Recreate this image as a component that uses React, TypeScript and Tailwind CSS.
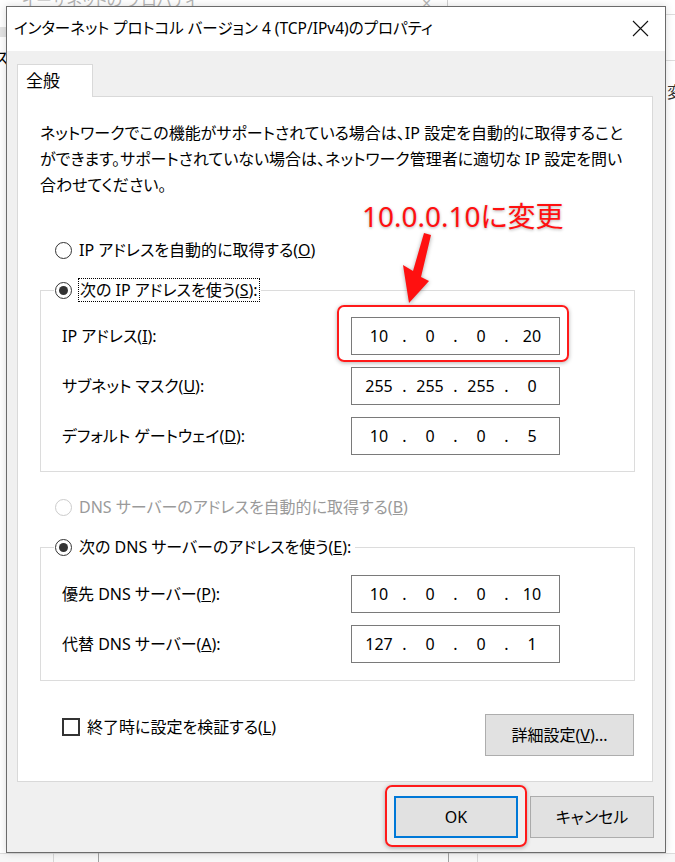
import React from 'react';

const ui = "font-['Noto_Sans','Noto_Sans_CJK_JP',sans-serif] [font-feature-settings:'palt']";

const Radio = ({ checked, disabled }: { checked?: boolean; disabled?: boolean }) => (
  <span
    className={`w-[17px] h-[17px] shrink-0 rounded-full border bg-white flex items-center justify-center ${
      disabled ? 'border-[#cccccc]' : 'border-[#333333]'
    }`}
  >
    {checked && <span className="w-[9px] h-[9px] rounded-full bg-[#333333]" />}
  </span>
);

const IpBox = ({ parts }: { parts: string[] }) => (
  <div className="w-[209px] h-[38px] border border-[#7a7a7a] bg-white flex items-center pl-[7px] text-[16px] text-black">
    {parts.map((p, i) => (
      <React.Fragment key={i}>
        <span className="w-[40px] text-center">{p}</span>
        {i < 3 && <span className="w-[11px] text-center">.</span>}
      </React.Fragment>
    ))}
  </div>
);

const Row = ({ label, ul, parts }: { label: string; ul: string; parts: string[] }) => (
  <div className="flex items-center h-[38px]">
    <span className="w-[310px] pl-[21px] whitespace-nowrap">
      {label}(<u>{ul}</u>):
    </span>
    <IpBox parts={parts} />
  </div>
);

const Btn = ({ children, className = '' }: { children: React.ReactNode; className?: string }) => (
  <button className={`bg-[#e1e1e1] flex items-center justify-center text-[16px] text-black ${className}`}>{children}</button>
);

export default function App() {
  return (
    <div className={`relative w-[675px] h-[862px] overflow-hidden bg-white text-[16px] text-black ${ui}`}>
      {/* window behind */}
      <div className="absolute inset-0">
        <div className="absolute left-[22px] top-[-12px] text-[16px] text-[#b4b4b4] whitespace-nowrap">イーサネットの プロパティ</div>
        <div className="absolute left-[422px] top-[-9px] text-[16px] text-[#b4b4b4]">×</div>
        <div className="absolute left-[447px] top-0 w-px h-[6px] bg-[#d0d0d0]" />
        <div className="absolute left-0 top-[27px] w-[6px] h-[10px] bg-[#e3e3e3]" />
        <div className="absolute left-[-6px] top-[46px] text-[16px]">ス</div>
        <div className="absolute left-[666px] top-[14px] w-[9px] h-px bg-[#dddddd]" />
        <div className="absolute left-[666px] top-[60px] w-[9px] h-px bg-[#dddddd]" />
        <div className="absolute left-[667px] top-[80px] text-[16px] text-[#333]">変</div>
        <div className="absolute left-0 top-[853px] w-[675px] h-[9px] bg-[#f7f7f7] border-t border-[#dcdcdc]" />
        <div className="absolute left-[53px] top-[853px] w-px h-[9px] bg-[#d6d6d6]" />
        <div className="absolute left-[98px] top-[853px] w-px h-[9px] bg-[#a0a0a0]" />
        <div className="absolute left-[448px] top-[853px] w-px h-[9px] bg-[#a0a0a0]" />
        <div className="absolute left-[477px] top-[853px] w-px h-[9px] bg-[#d6d6d6]" />
      </div>

      {/* dialog */}
      <div className="absolute left-[6px] top-[6px] w-[660px] h-[847px] border border-[#6b6b6b] flex flex-col bg-[#f0f0f0] shadow-[0_0_8px_rgba(0,0,0,0.15)]">
        <div className="h-[44px] bg-white flex items-center justify-between pl-[7px] pr-[16px] shrink-0">
          <span className="text-[15.5px] whitespace-nowrap">インターネット プロトコル バージョン 4 (TCP/IPv4)のプロパティ</span>
          <svg width="17" height="17" viewBox="0 0 17 17" className="mb-[2px]">
            <path d="M1 1L16 16M16 1L1 16" stroke="#111" strokeWidth="1.1" />
          </svg>
        </div>

        <div className="flex-1 flex flex-col px-[10px]">
          <div className="mt-[13px] flex">
            <div className="w-[76px] h-[33px] bg-white border border-b-0 border-[#d9d9d9] pl-[8px] pt-[3px] text-[17px] relative z-10 -mb-px">
              全般
            </div>
          </div>
          <div className="w-[636px] h-[686px] bg-white border border-[#d9d9d9] flex flex-col pl-[22px]">
            <p className="mt-[23px] leading-[26px] whitespace-nowrap">
              ネットワークでこの機能がサポートされている場合は、IP 設定を自動的に取得すること
              <br />
              ができます。サポートされていない場合は、ネットワーク管理者に適切な IP 設定を問い
              <br />
              合わせてください。
            </p>

            <div className="mt-[40px] h-[24px] flex items-center pl-[15px] gap-[7px]">
              <Radio />
              <span className="whitespace-nowrap">
                IP アドレスを自動的に取得する(<u>O</u>)
              </span>
            </div>

            <fieldset className="mt-[16px] w-[595px] h-[194px] border border-[#dcdcdc]">
              <legend className="ml-[13px] px-px">
                <div className="flex items-center gap-[6px] h-[24px]">
                  <Radio checked />
                  <span className="whitespace-nowrap border border-dotted border-black px-[1px] leading-[22px]">
                    次の IP アドレスを使う(<u>S</u>):
                  </span>
                </div>
              </legend>
              <div className="mt-[15px] flex flex-col gap-[12px]">
                <Row label="IP アドレス" ul="I" parts={['10', '0', '0', '20']} />
                <Row label="サブネット マスク" ul="U" parts={['255', '255', '255', '0']} />
                <Row label="デフォルト ゲートウェイ" ul="D" parts={['10', '0', '0', '5']} />
              </div>
            </fieldset>

            <div className="mt-[23px] h-[24px] flex items-center pl-[15px] gap-[7px] text-[#9a9a9a]">
              <Radio disabled />
              <span className="whitespace-nowrap">
                DNS サーバーのアドレスを自動的に取得する(<u>B</u>)
              </span>
            </div>

            <fieldset className="mt-[16px] w-[595px] h-[146px] border border-[#dcdcdc]">
              <legend className="ml-[13px] px-px">
                <div className="flex items-center gap-[7px] h-[24px]">
                  <Radio checked />
                  <span className="whitespace-nowrap pr-[3px]">
                    次の DNS サーバーのアドレスを使う(<u>E</u>):
                  </span>
                </div>
              </legend>
              <div className="mt-[16px] flex flex-col gap-[12px]">
                <Row label="優先 DNS サーバー" ul="P" parts={['10', '0', '0', '10']} />
                <Row label="代替 DNS サーバー" ul="A" parts={['127', '0', '0', '1']} />
              </div>
            </fieldset>

            <div className="mt-[34px] flex items-start justify-between pr-[18px]">
              <div className="flex items-center gap-[7px] pl-[22px] h-[24px]">
                <span className="w-[18px] h-[18px] border-2 border-[#333333] bg-white" />
                <span className="whitespace-nowrap">
                  終了時に設定を検証する(<u>L</u>)
                </span>
              </div>
              <Btn className="w-[149px] h-[42px] -mt-[1px] border border-[#adadad]">
                詳細設定(<u>V</u>)...
              </Btn>
            </div>
          </div>

          <div className="mt-[14px] flex justify-end gap-[12px] pr-px">
            <Btn className="w-[124px] h-[42px] border-2 border-[#0078d7]">OK</Btn>
            <Btn className="w-[124px] h-[42px] border border-[#adadad]">キャンセル</Btn>
          </div>
        </div>
      </div>

      {/* annotations */}
      <div className="absolute left-[362px] top-[198px] text-[28px] leading-[36px] text-[#ff1010] whitespace-nowrap [text-shadow:0_1px_3px_rgba(0,0,0,0.3)]">
        10.0.0.10に変更
      </div>
      <svg className="absolute left-0 top-0 pointer-events-none" width="675" height="862" style={{ filter: 'drop-shadow(0 1px 2px rgba(0,0,0,0.35))' }}>
        <polygon points="424,233 431,235 421,277 429,281 409,303 403,265 413,271" fill="#ff1010" />
      </svg>
      <div className="absolute left-[337px] top-[305px] w-[232px] h-[57px] border-2 border-[#ff1a1a] rounded-[7px] shadow-[0_1px_4px_rgba(0,0,0,0.3)]" />
      <div className="absolute left-[385px] top-[785px] w-[142px] h-[62px] border-2 border-[#ff1a1a] rounded-[7px] shadow-[0_1px_4px_rgba(0,0,0,0.3)]" />
    </div>
  );
}
